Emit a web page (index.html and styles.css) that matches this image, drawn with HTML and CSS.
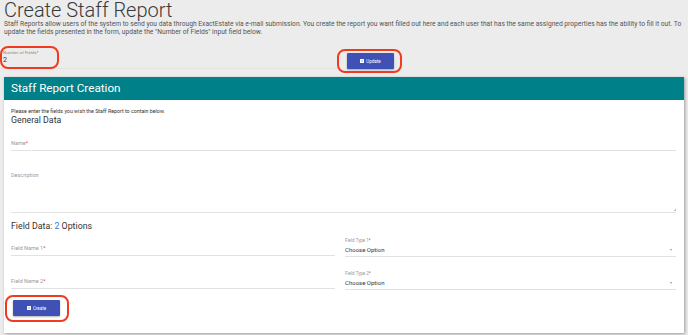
FILE: index.html
```html
<!DOCTYPE html>
<html>
<head>
  <title>Create Staff Report</title>
  <meta charset="UTF-8"/>
  <link rel="stylesheet" href="styles.css">
</head>

<body>
<header class="page-head">
  <h1>Create Staff Report</h1>
  <p class="intro">Staff Reports allow users of the system to send you data through ExactEstate via e-mail submission. You create the report you want filled out here and each user that has the same assigned properties has the ability to fill it out. To update the fields presented in the form, update the "Number of Fields" input field below.</p>
</header>

<div class="count-row">
  <div class="field count-field">
    <label>Number of Fields<span class="req">*</span></label>
    <div class="value">2</div>
  </div>
  <div class="count-action">
    <button class="btn"><svg class="btn-icon" viewBox="0 0 8 8"><rect width="8" height="8" rx="1" fill="#fff"/><rect x="3" y="3" width="2" height="2" fill="#3f51b5"/></svg>Update</button>
  </div>
</div>

<section class="card">
  <div class="card-head">Staff Report Creation</div>
  <div class="card-body">
    <p class="hint">Please enter the fields you wish the Staff Report to contain below.</p>
    <h2>General Data</h2>

    <div class="field name-field">
      <label>Name<span class="req">*</span></label>
    </div>

    <div class="field desc-field">
      <label>Description</label>
      <span class="grip"></span>
    </div>

    <h2 class="options-title">Field Data: <span class="num">2</span> Options</h2>

    <div class="pair">
      <div class="field name-col">
        <label>Field Name 1<span class="req">*</span></label>
      </div>
      <div class="field select-col">
        <label class="small">Field Type 1<span class="req">*</span></label>
        <div class="value">Choose Option<span class="caret">▾</span></div>
      </div>
    </div>

    <div class="pair second">
      <div class="field name-col">
        <label>Field Name 2<span class="req">*</span></label>
      </div>
      <div class="field select-col">
        <label class="small">Field Type 2<span class="req">*</span></label>
        <div class="value">Choose Option<span class="caret">▾</span></div>
      </div>
    </div>

    <button class="btn create-btn"><svg class="btn-icon" viewBox="0 0 8 8"><rect width="8" height="8" rx="1" fill="#fff"/><rect x="3" y="3" width="2" height="2" fill="#3f51b5"/></svg>Create</button>
  </div>
</section>

<!-- red marks from the screenshot -->
<span class="ring ring-count"></span>
<span class="ring ring-update"></span>
<span class="ring ring-create"></span>
</body>
</html>
```

FILE: styles.css
```css
* {
  box-sizing: border-box;
}

body {
  font-family: Roboto, "Liberation Sans", sans-serif;
  background-color: #ececec;
  color: #333;
  margin: 0;
  padding: 0 4px;
  position: relative;
  height: 335px;
  overflow: hidden;
}

/* page head */
.page-head h1 {
  font-size: 20px;
  font-weight: 300;
  line-height: 20px;
  margin: 0;
  color: #3a3a3a;
}

.intro {
  font-size: 6.7px;
  line-height: 8px;
  margin: 0;
  color: #555;
}

/* number of fields row */
.count-row {
  display: flex;
  align-items: flex-start;
  margin: 8px -4px 0;
  height: 25px;
}

.field {
  position: relative;
  border-bottom: 1px solid #e2e2e2;
}

.field label {
  display: block;
  font-size: 5.5px;
  line-height: 7px;
  color: #9a9a9a;
}

.req {
  color: #e53935;
}

.count-field {
  width: 337px;
  padding-left: 3px;
  height: 25px;
}

.count-field label {
  margin-top: 6px;
  font-size: 4.4px;
  line-height: 6px;
  color: #a88466;
}

.count-field .value {
  font-size: 7px;
  line-height: 8px;
}

.count-action {
  padding-left: 10px;
  padding-top: 9px;
}

.btn {
  display: flex;
  align-items: center;
  justify-content: center;
  gap: 2px;
  background-color: #3f51b5;
  color: #fff;
  border: none;
  border-radius: 1px;
  font-family: inherit;
  font-size: 4.5px;
  width: 47px;
  height: 16px;
  padding: 0;
  box-shadow: 0 1px 2px rgba(0, 0, 0, 0.3);
}

.btn-icon {
  width: 4px;
  height: 4px;
}

/* card */
.card {
  margin-top: 8px;
  background-color: #fff;
  box-shadow: 1px 1px 3px rgba(0, 0, 0, 0.35);
  height: 256px;
}

.card-head {
  background-color: #008189;
  color: #fff;
  font-size: 11.7px;
  font-weight: 400;
  height: 23px;
  line-height: 23px;
  padding-left: 7px;
}

.card-body {
  padding: 8px 8px 0 7px;
}

.hint {
  font-size: 5.3px;
  margin: 0;
  line-height: 6px;
  color: #333;
}

.card-body h2 {
  font-size: 8.8px;
  font-weight: 400;
  margin: 0;
  line-height: 12px;
  color: #333;
}

.name-field {
  height: 25px;
  padding-top: 14px;
}

.desc-field {
  height: 62px;
  padding-top: 21px;
}

.grip {
  position: absolute;
  right: 0;
  bottom: 1px;
  width: 3px;
  height: 3px;
  background: linear-gradient(135deg, transparent 50%, #bbb 50%);
}

.card-body .options-title {
  margin-top: 7px;
}

.options-title .num {
  color: #2d7fd6;
}

.pair {
  display: flex;
  gap: 10px;
}

.name-col {
  width: 324px;
  height: 24px;
  padding-top: 13px;
}

.select-col {
  flex: 1;
  height: 25px;
  padding-top: 6px;
}

.select-col label.small {
  font-size: 4.5px;
  line-height: 6px;
  margin-bottom: 2px;
}

.select-col .value {
  font-size: 6px;
  color: #333;
  display: flex;
  justify-content: space-between;
  padding-right: 4px;
  line-height: 8px;
}

.caret {
  font-size: 4px;
  color: #999;
}

.pair.second .name-col {
  height: 32px;
  padding-top: 21px;
}

.pair.second .select-col {
  height: 33px;
  padding-top: 14px;
}

.create-btn {
  margin-top: 10px;
  margin-left: 2px;
}

/* red rings drawn over the page */
.ring {
  position: absolute;
  border: 2px solid #f03b1f;
  border-radius: 8px;
}

.ring-count {
  left: 0;
  top: 46px;
  width: 59px;
  height: 23px;
}

.ring-update {
  left: 337px;
  top: 49px;
  width: 65px;
  height: 24px;
}

.ring-create {
  left: 5px;
  top: 295px;
  width: 64px;
  height: 27px;
}
```
